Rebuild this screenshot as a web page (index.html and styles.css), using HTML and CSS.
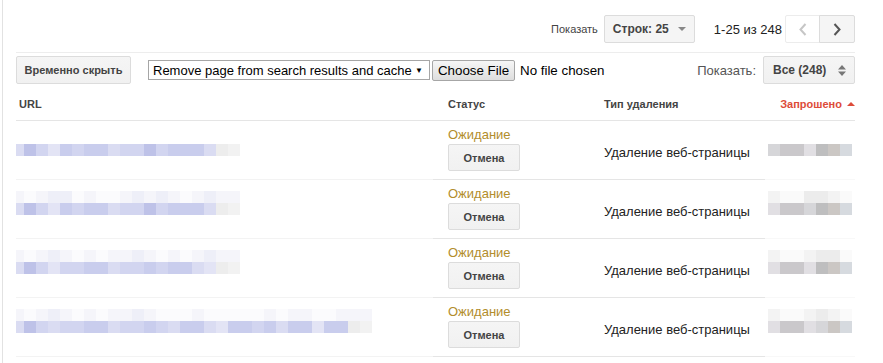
FILE: index.html
```html
<!DOCTYPE html>
<html lang="ru">
<head>
    <meta charset="UTF-8">
    <meta name="viewport" content="width=device-width, initial-scale=1.0">
    <title>Удаление URL</title>
    <link rel="stylesheet" href="styles.css">
</head>
<body>
<div class="page">

    <!-- pagination -->
    <div class="pager-bar">
        <span class="pager-label">Показать</span>
        <div class="rows-select"><span>Строк: 25</span><span class="caret"></span></div>
        <span class="range">1-25 из 248</span>
        <button class="pg prev"><svg width="8" height="13" viewBox="0 0 8 13"><polyline points="6.5,1 1.5,6.5 6.5,12" fill="none" stroke="#c6c6c6" stroke-width="2"/></svg></button>
        <button class="pg next"><svg width="8" height="13" viewBox="0 0 8 13"><polyline points="1.5,1 6.5,6.5 1.5,12" fill="none" stroke="#555" stroke-width="2"/></svg></button>
    </div>

    <!-- toolbar -->
    <div class="toolbar">
        <button class="btn hide-btn">Временно скрыть</button>
        <div class="native-select"><span>Remove page from search results and cache</span><span class="tri">▼</span></div>
        <div class="file-input"><span class="file-btn">Choose File</span><span class="file-name">No file chosen</span></div>
        <span class="show-label">Показать:</span>
        <button class="btn filter-btn"><span>Все (248)</span><svg width="8" height="11" viewBox="0 0 8 11"><path d="M0 4.5 L4 0 L8 4.5 Z M0 6.5 L4 11 L8 6.5 Z" fill="#777"/></svg></button>
    </div>

    <!-- table -->
    <div class="grid head">
        <div class="h-url">URL</div>
        <div class="h-status">Статус</div>
        <div class="h-type">Тип удаления</div>
        <div class="h-date">Запрошено <span class="up"></span></div>
    </div>

    <div class="grid row">
        <div class="cell url">
            <div class="px"></div>
            <div class="px"><i class="w8 b4"></i><i class="b1"></i><i class="b3"></i><i class="b5"></i><i class="b2"></i><i class="b3"></i><i class="b2"></i><i class="b2"></i><i class="b4"></i><i class="b3"></i><i class="b3"></i><i class="b1"></i><i class="b3"></i><i class="b2"></i><i class="b2"></i><i class="b2"></i><i class="b4"></i><i class="g1"></i><i class="g2"></i></div>
        </div>
        <div class="cell status">
            <div class="pending">Ожидание</div>
            <button class="btn cancel">Отмена</button>
        </div>
        <div class="cell type">Удаление веб-страницы</div>
        <div class="cell date">
            <div class="px"></div>
            <div class="px"><i class="d3"></i><i class="d2"></i><i class="d2"></i><i class="d4"></i><i class="d1"></i><i class="d5"></i><i class="d6"></i></div>
        </div>
    </div>

    <div class="grid row">
        <div class="cell url">
            <div class="px"><i class="w8 f2"></i><i class="f3"></i><i class="f2"></i><i class="f1"></i><i class="f1"></i><i class="f3"></i><i class="f2"></i><i class="f3"></i><i class="f3"></i><i class="f2"></i><i class="f1"></i><i class="f2"></i><i class="f1"></i><i class="f2"></i><i class="f3"></i><i class="f2"></i><i class="f1"></i><i class="f2"></i><i class="f2"></i></div>
            <div class="px"><i class="w8 b4"></i><i class="b1"></i><i class="b3"></i><i class="b5"></i><i class="b2"></i><i class="b3"></i><i class="b2"></i><i class="b2"></i><i class="b4"></i><i class="b3"></i><i class="b3"></i><i class="b1"></i><i class="b3"></i><i class="b2"></i><i class="b2"></i><i class="b2"></i><i class="b4"></i><i class="g1"></i><i class="g2"></i></div>
        </div>
        <div class="cell status">
            <div class="pending">Ожидание</div>
            <button class="btn cancel">Отмена</button>
        </div>
        <div class="cell type">Удаление веб-страницы</div>
        <div class="cell date">
            <div class="px"><i class="e2"></i><i class="e3"></i><i class="e3"></i><i class="e1"></i><i class="e1"></i><i class="e2"></i><i class="e3"></i></div>
            <div class="px"><i class="d4"></i><i class="d2"></i><i class="d2"></i><i class="d3"></i><i class="d1"></i><i class="d5"></i><i class="d6"></i></div>
        </div>
    </div>

    <div class="grid row">
        <div class="cell url">
            <div class="px"><i class="w8 f2"></i><i class="f3"></i><i class="f2"></i><i class="f1"></i><i class="f2"></i><i class="f3"></i><i class="f2"></i><i class="f3"></i><i class="f2"></i><i class="f2"></i><i class="f1"></i><i class="f2"></i><i class="f3"></i><i class="f2"></i><i class="f3"></i><i class="f2"></i><i class="f1"></i><i class="f2"></i><i class="f2"></i></div>
            <div class="px"><i class="w8 b4"></i><i class="b1"></i><i class="b3"></i><i class="b5"></i><i class="b3"></i><i class="b3"></i><i class="b2"></i><i class="b2"></i><i class="b4"></i><i class="b3"></i><i class="b3"></i><i class="b2"></i><i class="b3"></i><i class="b2"></i><i class="b2"></i><i class="b4"></i><i class="b5"></i><i class="g1"></i><i class="g2"></i></div>
        </div>
        <div class="cell status">
            <div class="pending">Ожидание</div>
            <button class="btn cancel">Отмена</button>
        </div>
        <div class="cell type">Удаление веб-страницы</div>
        <div class="cell date">
            <div class="px"><i class="e2"></i><i class="e3"></i><i class="e3"></i><i class="e2"></i><i class="e1"></i><i class="e1"></i><i class="e3"></i></div>
            <div class="px"><i class="d4"></i><i class="d2"></i><i class="d2"></i><i class="d4"></i><i class="d1"></i><i class="d5"></i><i class="d6"></i></div>
        </div>
    </div>

    <div class="grid row">
        <div class="cell url">
            <div class="px"><i class="w8 f2"></i><i class="f3"></i><i class="f2"></i><i class="f1"></i><i class="f2"></i><i class="f3"></i><i class="f2"></i><i class="f3"></i><i class="f2"></i><i class="f2"></i><i class="f1"></i><i class="f2"></i><i class="f3"></i><i class="f3"></i><i class="f3"></i><i class="f2"></i><i class="f3"></i><i class="f3"></i><i class="f3"></i><i class="f3"></i><i class="f3"></i><i class="f2"></i><i class="f3"></i><i class="f2"></i><i class="f2"></i><i class="f3"></i><i class="f3"></i><i class="f2"></i><i class="f2"></i><i class="f2"></i></div>
            <div class="px"><i class="w8 b4"></i><i class="b1"></i><i class="b3"></i><i class="b4"></i><i class="b3"></i><i class="b3"></i><i class="b2"></i><i class="b2"></i><i class="b4"></i><i class="b3"></i><i class="b3"></i><i class="b2"></i><i class="b3"></i><i class="b4"></i><i class="b2"></i><i class="b2"></i><i class="b4"></i><i class="b5"></i><i class="b2"></i><i class="b2"></i><i class="b3"></i><i class="b2"></i><i class="b4"></i><i class="b2"></i><i class="b2"></i><i class="b5"></i><i class="b2"></i><i class="b2"></i><i class="g1"></i><i class="g2"></i></div>
        </div>
        <div class="cell status">
            <div class="pending">Ожидание</div>
            <button class="btn cancel">Отмена</button>
        </div>
        <div class="cell type">Удаление веб-страницы</div>
        <div class="cell date">
            <div class="px"><i class="e2"></i><i class="e3"></i><i class="e3"></i><i class="e2"></i><i class="e1"></i><i class="e2"></i><i class="e3"></i></div>
            <div class="px"><i class="d4"></i><i class="d2"></i><i class="d2"></i><i class="d4"></i><i class="d3"></i><i class="d5"></i><i class="d6"></i></div>
        </div>
    </div>

</div>
</body>
</html>
```

FILE: styles.css
```css
* {
    box-sizing: border-box;
}

body {
    margin: 0;
    font-family: "Liberation Sans", Arial, sans-serif;
    color: #222;
    background-color: #fff;
}

.page {
    margin-left: 2px;
    border-left: 1px solid #e2e2e2;
    min-height: 363px;
    padding: 0 28px 0 13px;
}

/* pagination bar */
.pager-bar {
    display: flex;
    justify-content: flex-end;
    align-items: center;
    padding: 15px 0 9px;
    border-bottom: 1px solid #ededed;
}

.pager-label {
    font-size: 11px;
    color: #444;
    margin-right: 6px;
}

.rows-select {
    width: 91px;
    height: 28px;
    display: flex;
    justify-content: space-between;
    align-items: center;
    padding: 0 8px;
    background-color: #f5f5f5;
    border: 1px solid #dcdcdc;
    border-radius: 2px;
    font-size: 12px;
    font-weight: bold;
    color: #444;
}

.caret {
    width: 0;
    height: 0;
    border-left: 4px solid transparent;
    border-right: 4px solid transparent;
    border-top: 4px solid #888;
}

.range {
    font-size: 13px;
    margin: 0 3px 0 19px;
}

.pg {
    width: 36px;
    height: 28px;
    padding: 0;
    display: flex;
    justify-content: center;
    align-items: center;
    border: 1px solid #dcdcdc;
    border-radius: 2px;
    background-color: #f5f5f5;
}

.pg.prev {
    width: 35px;
    background-color: #fff;
    border-color: #ececec;
    border-radius: 2px 0 0 2px;
}

.pg.next {
    margin-left: -1px;
    border-radius: 0 2px 2px 0;
}

/* toolbar */
.toolbar {
    display: flex;
    align-items: center;
    height: 31px;
    padding-top: 3px;
    white-space: nowrap;
}

.btn {
    height: 28px;
    padding: 0 10px;
    font-family: "Liberation Sans", Arial, sans-serif;
    font-size: 11px;
    font-weight: bold;
    color: #444;
    white-space: nowrap;
    background: linear-gradient(#f5f5f5, #f1f1f1);
    border: 1px solid #dcdcdc;
    border-radius: 2px;
}

.hide-btn {
    width: 115px;
    padding: 0;
}

.native-select {
    margin-left: 17px;
    width: 282px;
    height: 20px;
    display: flex;
    justify-content: space-between;
    align-items: center;
    padding: 0 6px 0 4px;
    border: 1px solid #a6a6a6;
    font-size: 13px;
    color: #000;
}

.tri {
    font-size: 8px;
}

.file-input {
    margin-left: 2px;
    display: flex;
    align-items: center;
    font-size: 13.33px;
    color: #000;
}

.file-btn {
    width: 83px;
    height: 21px;
    line-height: 19px;
    text-align: center;
    border: 1px solid #a6a6a6;
    border-radius: 2px;
    background: linear-gradient(#f6f6f6, #dedede);
}

.file-name {
    margin-left: 5px;
}

.show-label {
    margin-left: auto;
    margin-right: 7px;
    font-size: 13px;
    color: #555;
}

.filter-btn {
    width: 92px;
    display: flex;
    justify-content: space-between;
    align-items: center;
    font-size: 12px;
    padding: 0 8px 0 9px;
}

/* table */
.grid {
    display: grid;
    grid-template-columns: 417px 156px 176px 1fr;
}

.head {
    padding: 14px 0 9px;
    line-height: 13px;
    font-size: 11px;
    font-weight: bold;
    color: #444;
    border-bottom: 1px solid #e5e5e5;
}

.h-url {
    padding-left: 3px;
}

.h-status,
.h-type {
    padding-left: 15px;
}

.h-date {
    text-align: right;
    color: #dd4b39;
}

.up {
    display: inline-block;
    width: 0;
    height: 0;
    margin-left: 2px;
    vertical-align: 2px;
    border-left: 4px solid transparent;
    border-right: 4px solid transparent;
    border-bottom: 4px solid #dd4b39;
}

.row {
    height: 59px;
}

.cell {
    border-bottom: 1px solid #e5e5e5;
}

.url {
    padding-top: 11px;
    border-bottom-color: #f3f3f3;
}

.date {
    padding: 11px 0 0 3px;
    border-bottom-color: #f8f8f8;
}

.status {
    padding: 6px 0 0 15px;
}

.pending {
    font-size: 13px;
    line-height: 15px;
    color: #b28d2c;
}

.cancel {
    margin-top: 2px;
    width: 72px;
    height: 27px;
}

.type {
    padding: 24px 0 0 15px;
    font-size: 13px;
    line-height: 15px;
}

/* pixelated blur blocks */
.px {
    display: flex;
    height: 12px;
}

.px i {
    width: 12px;
    height: 12px;
}

.px i.w8 { width: 8px; }

.b1 { background-color: #bec2e8; }
.b2 { background-color: #c9cded; }
.b3 { background-color: #d2d5f0; }
.b4 { background-color: #dadcf2; }
.b5 { background-color: #e3e4f5; }
.g1 { background-color: #ededed; }
.g2 { background-color: #f2f2f2; }

.f1 { background-color: #eeeff8; }
.f2 { background-color: #f5f5fa; }
.f3 { background-color: #fbfbfd; }

.d1 { background-color: #bebebf; }
.d2 { background-color: #cac8cb; }
.d3 { background-color: #d6d6d9; }
.d4 { background-color: #e1dfe3; }
.d5 { background-color: #cbc7c4; }
.d6 { background-color: #d6dadf; }

.e1 { background-color: #ececec; }
.e2 { background-color: #f3f3f3; }
.e3 { background-color: #fafafa; }
```
